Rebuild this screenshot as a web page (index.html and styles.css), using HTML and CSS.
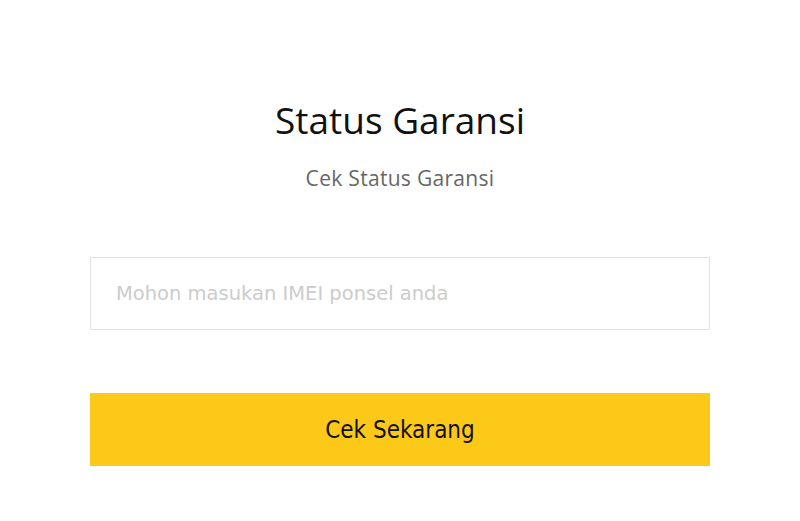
FILE: index.html
```html
<!DOCTYPE html>
<html lang="id">
<head>
    <meta charset="UTF-8">
    <meta name="viewport" content="width=device-width, initial-scale=1.0">
    <title>Status Garansi</title>
    <link rel="stylesheet" href="styles.css">
</head>
<body>
    <div class="container">
        <h1 class="title">Status Garansi</h1>
        <p class="subtitle">Cek Status Garansi</p>
        <div class="form">
            <input type="text" id="imei" class="imei-input" placeholder="Mohon masukan IMEI ponsel anda">
            <button class="check-btn">Cek Sekarang</button>
        </div>
    </div>
</body>
</html>
```

FILE: styles.css
```css
body {
    margin: 0;
    background: #fff;
    font-family: "Open Sans", "Noto Sans", sans-serif;
}
.container {
    width: 620px;
    margin: 0 auto;
    padding-top: 96px;
}
.title {
    margin: 0;
    font-size: 37px;
    font-weight: 400;
    line-height: 48px;
    text-align: center;
    color: #111;
}
.subtitle {
    margin: 20px 0 0;
    font-size: 21px;
    letter-spacing: 0.3px;
    line-height: 28px;
    text-align: center;
    color: #666;
}
.form {
    display: flex;
    flex-direction: column;
    gap: 63px;
    margin-top: 65px;
}
.imei-input {
    box-sizing: border-box;
    height: 73px;
    padding: 0 25px;
    border: 1px solid #e2e2e2;
    font-family: "DejaVu Sans", Verdana, sans-serif;
    font-size: 19.5px;
    color: #333;
    outline: none;
}
.imei-input::placeholder {
    color: #ccc;
}
.check-btn {
    height: 73px;
    border: none;
    background: #fdc918;
    font-family: "DejaVu Sans Condensed", "DejaVu Sans", Tahoma, sans-serif;
    font-stretch: condensed;
    font-size: 24px;
    color: #111;
    cursor: pointer;
}
```
